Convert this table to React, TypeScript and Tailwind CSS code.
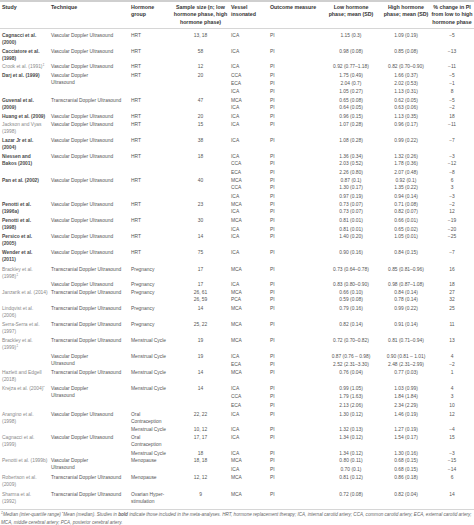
import React from 'react'

// =============================================================================
// Types
// =============================================================================

interface Cell {
    t: string[]
    span?: number
    bold?: boolean
    sup?: string
}

interface Row {
    h: string
    study?: Cell
    tech?: Cell
    horm?: Cell
    samp?: Cell
    v: string
    lo: string
    hi: string
    pc: string
}

const VDU = 'Vascular Doppler Ultrasound'
const TDU = 'Transcranial Doppler Ultrasound'

const c = (t: string | string[], span?: number): Cell => ({
    t: Array.isArray(t) ? t : [t],
    span,
})

const s = (t: string[], bold: boolean, span?: number, sup?: string): Cell => ({ t, bold, span, sup })

// =============================================================================
// Data
// =============================================================================

const rows: Row[] = [
    { h: 'h-[16px]', study: s(['Cagnacci et al.', '(2000)'], true), tech: c(VDU), horm: c('HRT'), samp: c('13, 18'), v: 'ICA', lo: '1.15 (0.3)', hi: '1.09 (0.19)', pc: '−5' },
    { h: 'h-[15px]', study: s(['Cacciatore et al.', '(1998)'], true), tech: c(VDU), horm: c('HRT'), samp: c('58'), v: 'ICA', lo: '0.98 (0.08)', hi: '0.85 (0.08)', pc: '−13' },
    { h: 'h-[9px]', study: s(['Crook et al. (1991)'], false, undefined, '‡'), tech: c(VDU), horm: c('HRT'), samp: c('12'), v: 'ICA', lo: '0.92 (0.77–1.18)', hi: '0.82 (0.70–0.90)', pc: '−11' },
    { h: 'h-[8px]', study: s(['Darj et al. (1999)'], true, 3), tech: c(['Vascular Doppler', 'Ultrasound'], 3), horm: c('HRT', 3), samp: c('20', 3), v: 'CCA', lo: '1.75 (0.49)', hi: '1.66 (0.37)', pc: '−5' },
    { h: 'h-[8px]', v: 'ECA', lo: '2.04 (0.7)', hi: '2.02 (0.53)', pc: '−1' },
    { h: 'h-[9px]', v: 'ICA', lo: '1.05 (0.27)', hi: '1.13 (0.31)', pc: '8' },
    { h: 'h-[7px]', study: s(['Guvenal et al.', '(2009)'], true, 2), tech: c(TDU, 2), horm: c('HRT', 2), samp: c('47', 2), v: 'MCA', lo: '0.65 (0.08)', hi: '0.62 (0.05)', pc: '−5' },
    { h: 'h-[9px]', v: 'ICA', lo: '0.64 (0.05)', hi: '0.63 (0.06)', pc: '−2' },
    { h: 'h-[8px]', study: s(['Huang et al. (2009)'], true), tech: c(VDU), horm: c('HRT'), samp: c('20'), v: 'ICA', lo: '0.96 (0.15)', hi: '1.13 (0.35)', pc: '18' },
    { h: 'h-[16px]', study: s(['Jackson and Vyas', '(1998)'], false), tech: c(VDU), horm: c('HRT'), samp: c('15'), v: 'ICA', lo: '1.07 (0.28)', hi: '0.96 (0.17)', pc: '−11' },
    { h: 'h-[16px]', study: s(['Lazar Jr et al.', '(2004)'], true), tech: c(VDU), horm: c('HRT'), samp: c('38'), v: 'ICA', lo: '1.08 (0.28)', hi: '0.99 (0.22)', pc: '−7' },
    { h: 'h-[7px]', study: s(['Niessen and', 'Bakos (2001)'], true, 3), tech: c(VDU, 3), horm: c('HRT', 3), samp: c('18', 3), v: 'ICA', lo: '1.36 (0.34)', hi: '1.32 (0.26)', pc: '−3' },
    { h: 'h-[9px]', v: 'CCA', lo: '2.03 (0.52)', hi: '1.78 (0.36)', pc: '−12' },
    { h: 'h-[8px]', v: 'ECA', lo: '2.26 (0.80)', hi: '2.07 (0.48)', pc: '−8' },
    { h: 'h-[7px]', study: s(['Pan et al. (2002)'], true, 3), tech: c(VDU, 3), horm: c('HRT', 3), samp: c('40', 3), v: 'MCA', lo: '0.87 (0.1)', hi: '0.92 (0.1)', pc: '6' },
    { h: 'h-[9px]', v: 'CCA', lo: '1.30 (0.17)', hi: '1.35 (0.22)', pc: '3' },
    { h: 'h-[8px]', v: 'ICA', lo: '0.97 (0.19)', hi: '0.94 (0.14)', pc: '−3' },
    { h: 'h-[7px]', study: s(['Penotti et al.', '(1996a)'], true, 2), tech: c(VDU, 2), horm: c('HRT', 2), samp: c('23', 2), v: 'MCA', lo: '0.73 (0.07)', hi: '0.71 (0.08)', pc: '−2' },
    { h: 'h-[9px]', v: 'ICA', lo: '0.73 (0.07)', hi: '0.82 (0.07)', pc: '12' },
    { h: 'h-[9px]', study: s(['Penotti et al.', '(1998)'], true, 2), tech: c(VDU, 2), horm: c('HRT', 2), samp: c('30', 2), v: 'MCA', lo: '0.81 (0.01)', hi: '0.66 (0.01)', pc: '−19' },
    { h: 'h-[7px]', v: 'ICA', lo: '0.81 (0.01)', hi: '0.65 (0.02)', pc: '−20' },
    { h: 'h-[16px]', study: s(['Persico et al.', '(2005)'], true), tech: c(VDU), horm: c('HRT'), samp: c('14'), v: 'ICA', lo: '1.40 (0.20)', hi: '1.05 (0.01)', pc: '−25' },
    { h: 'h-[17px]', study: s(['Wender et al.', '(2011)'], true), tech: c(VDU), horm: c('HRT'), samp: c('75'), v: 'ICA', lo: '0.90 (0.16)', hi: '0.84 (0.15)', pc: '−7' },
    { h: 'h-[15px]', study: s(['Brackley et al.', '(1998)'], false, 2, '‡'), tech: c(TDU), horm: c('Pregnancy'), samp: c('17'), v: 'MCA', lo: '0.73 (0.64–0.78)', hi: '0.85 (0.81–0.96)', pc: '16' },
    { h: 'h-[8px]', tech: c(VDU), horm: c('Pregnancy'), samp: c('17'), v: 'ICA', lo: '0.83 (0.80–0.90)', hi: '0.98 (0.87–1.08)', pc: '18' },
    { h: 'h-[7px]', study: s(['Janzarik et al. (2014)'], false, 2), tech: c(TDU, 2), horm: c('Pregnancy', 2), samp: c('26, 61'), v: 'MCA', lo: '0.66 (0.10)', hi: '0.84 (0.14)', pc: '27' },
    { h: 'h-[9px]', samp: c('26, 59'), v: 'PCA', lo: '0.59 (0.08)', hi: '0.78 (0.14)', pc: '32' },
    { h: 'h-[16px]', study: s(['Lindqvist et al.', '(2006)'], false), tech: c(TDU), horm: c('Pregnancy'), samp: c('14'), v: 'MCA', lo: '0.79 (0.16)', hi: '0.99 (0.22)', pc: '25' },
    { h: 'h-[16px]', study: s(['Serra-Serra et al.', '(1997)'], false), tech: c(TDU), horm: c('Pregnancy'), samp: c('25, 22'), v: 'MCA', lo: '0.82 (0.14)', hi: '0.91 (0.14)', pc: '11' },
    { h: 'h-[16px]', study: s(['Brackley et al.', '(1999)'], false, 3, '‡'), tech: c(TDU), horm: c('Menstrual Cycle'), samp: c('19'), v: 'MCA', lo: '0.72 (0.70–0.82)', hi: '0.81 (0.71–0.94)', pc: '13' },
    { h: 'h-[8px]', tech: c(['Vascular Doppler', 'Ultrasound'], 2), horm: c('Menstrual Cycle', 2), samp: c('19', 2), v: 'ICA', lo: '0.87 (0.76 – 0.98)', hi: '0.90 (0.81 – 1.01)', pc: '4' },
    { h: 'h-[8px]', v: 'ECA', lo: '2.52 (2.31–3.30)', hi: '2.48 (2.31–2.99)', pc: '−2' },
    { h: 'h-[16px]', study: s(['Hazlett and Edgell', '(2018)'], false), tech: c(TDU), horm: c('Menstrual Cycle'), samp: c('14'), v: 'MCA', lo: '0.76 (0.04)', hi: '0.77 (0.03)', pc: '1' },
    { h: 'h-[8px]', study: s(['Krejza et al. (2004)'], false, 3, '•'), tech: c(['Vascular Doppler', 'Ultrasound'], 3), horm: c('Menstrual Cycle', 3), samp: c('14', 3), v: 'ICA', lo: '0.99 (1.05)', hi: '1.03 (0.99)', pc: '4' },
    { h: 'h-[9px]', v: 'CCA', lo: '1.79 (1.63)', hi: '1.84 (1.84)', pc: '3' },
    { h: 'h-[9px]', v: 'ECA', lo: '2.13 (2.06)', hi: '2.34 (2.29)', pc: '10' },
    { h: 'h-[15px]', study: s(['Arangino et al.', '(1998)'], false, 2), tech: c(VDU, 2), horm: c(['Oral', 'Contraception']), samp: c('22, 22'), v: 'ICA', lo: '1.30 (0.12)', hi: '1.46 (0.19)', pc: '12' },
    { h: 'h-[8px]', horm: c('Menstrual Cycle'), samp: c('10, 12'), v: 'ICA', lo: '1.32 (0.13)', hi: '1.27 (0.19)', pc: '−4' },
    { h: 'h-[16px]', study: s(['Cagnacci et al.', '(1999)'], false, 2), tech: c(VDU, 2), horm: c(['Oral', 'Contraception']), samp: c('17, 17'), v: 'ICA', lo: '1.34 (0.12)', hi: '1.54 (0.17)', pc: '15' },
    { h: 'h-[7px]', horm: c('Menstrual Cycle'), samp: c('18'), v: 'ICA', lo: '1.34 (0.12)', hi: '1.30 (0.16)', pc: '−3' },
    { h: 'h-[9px]', study: s(['Penotti et al. (1999b)'], false, 2), tech: c(['Vascular Doppler', 'Ultrasound'], 2), horm: c('Menopause', 2), samp: c('18, 18', 2), v: 'MCA', lo: '0.80 (0.11)', hi: '0.68 (0.15)', pc: '−15' },
    { h: 'h-[8px]', v: 'ICA', lo: '0.70 (0.1)', hi: '0.68 (0.15)', pc: '−14' },
    { h: 'h-[17px]', study: s(['Robertson et al.', '(2009)'], false), tech: c(TDU), horm: c('Menopause'), samp: c('12, 12'), v: 'MCA', lo: '0.81 (0.12)', hi: '0.86 (0.18)', pc: '6' },
    { h: 'h-[18px]', study: s(['Sharma et al.', '(1992)'], false), tech: c(TDU), horm: c(['Ovarian Hyper-', 'stimulation']), samp: c('9'), v: 'MCA', lo: '0.72 (0.08)', hi: '0.82 (0.04)', pc: '14' },
]

// =============================================================================
// Cells
// =============================================================================

const td = 'p-0 align-top whitespace-nowrap'

function Lines({ cell }: { cell: Cell }) {
    return (
        <>
            {cell.t.map((line, i) => (
                <div key={i}>
                    {line}
                    {cell.sup && i === cell.t.length - 1 && <sup>{cell.sup}</sup>}
                </div>
            ))}
        </>
    )
}

function BodyRow({ row }: { row: Row }) {
    return (
        <tr className={row.h}>
            {row.study && (
                <td
                    rowSpan={row.study.span}
                    className={`${td} pl-[2px] ${row.study.bold ? 'font-bold text-[#4a4a4a]' : 'text-[#8a8a8a]'}`}
                >
                    <Lines cell={row.study} />
                </td>
            )}
            {row.tech && (
                <td rowSpan={row.tech.span} className={`${td} pl-[2px]`}>
                    <Lines cell={row.tech} />
                </td>
            )}
            {row.horm && (
                <td rowSpan={row.horm.span} className={`${td} pl-[1px]`}>
                    <Lines cell={row.horm} />
                </td>
            )}
            {row.samp && (
                <td rowSpan={row.samp.span} className={`${td} text-center`}>
                    <Lines cell={row.samp} />
                </td>
            )}
            <td className={`${td} pl-[1px]`}>{row.v}</td>
            <td className={`${td} pl-[2px]`}>PI</td>
            <td className={`${td} text-center`}>{row.lo}</td>
            <td className={`${td} text-center`}>{row.hi}</td>
            <td className={`${td} text-center`}>{row.pc}</td>
        </tr>
    )
}

// =============================================================================
// Main Component
// =============================================================================

export default function App() {
    const th = 'p-0 pt-[1.5px] pb-[2px] align-top font-bold whitespace-nowrap'

    return (
        <div className="w-[474px] h-[525px] overflow-hidden bg-white font-['Liberation_Sans',Arial,sans-serif] text-[#555]">
            <div className="h-[2px] bg-[#cfcfcf]" />
            <table className="w-[474px] table-fixed">
                <colgroup>
                    <col className="w-[49px]" />
                    <col className="w-[81px]" />
                    <col className="w-[41px]" />
                    <col className="w-[59px]" />
                    <col className="w-[38px]" />
                    <col className="w-[52px]" />
                    <col className="w-[62px]" />
                    <col className="w-[48px]" />
                    <col className="w-[44px]" />
                </colgroup>
                <thead>
                    <tr className="border-b border-[#d6d6d6] text-[5.3px] leading-[7.5px] text-[#333]">
                        <th className={`${th} pl-[2px] text-left`}>Study</th>
                        <th className={`${th} pl-[2px] text-left`}>Technique</th>
                        <th className={`${th} pl-[1px] text-left`}>Hormone<br />group</th>
                        <th className={`${th} text-center`}>Sample size (n; low<br />hormone phase, high<br />hormone phase)</th>
                        <th className={`${th} pl-[1px] text-left`}>Vessel<br />insonated</th>
                        <th className={`${th} pl-[2px] text-left`}>Outcome measure</th>
                        <th className={`${th} text-center`}>Low hormone<br />phase; mean (SD)</th>
                        <th className={`${th} text-center`}>High hormone<br />phase; mean (SD)</th>
                        <th className={`${th} text-center`}>% change in PI<br />from low to high<br />hormone phase</th>
                    </tr>
                </thead>
                <tbody className="text-[4.9px] leading-[7px]">
                    <tr className="h-[3px]"><td colSpan={9} className="p-0" /></tr>
                    {rows.map((row, i) => (
                        <BodyRow key={i} row={row} />
                    ))}
                </tbody>
            </table>
            {/* Footnote */}
            <div className="border-t border-[#d6d6d6] pt-[1px] pl-[1px] text-[4.6px] leading-[8px] italic text-[#666] whitespace-nowrap">
                <div>
                    <sup>‡</sup>Median (inter-quartile range) <sup>•</sup>Mean (median). Studies in <b>bold</b> indicate those included in the meta-analyses. HRT, hormone replacement therapy; ICA, internal carotid artery; CCA, common carotid artery; ECA, external carotid artery;
                </div>
                <div>MCA, middle cerebral artery; PCA, posterior cerebral artery.</div>
            </div>
        </div>
    )
}
